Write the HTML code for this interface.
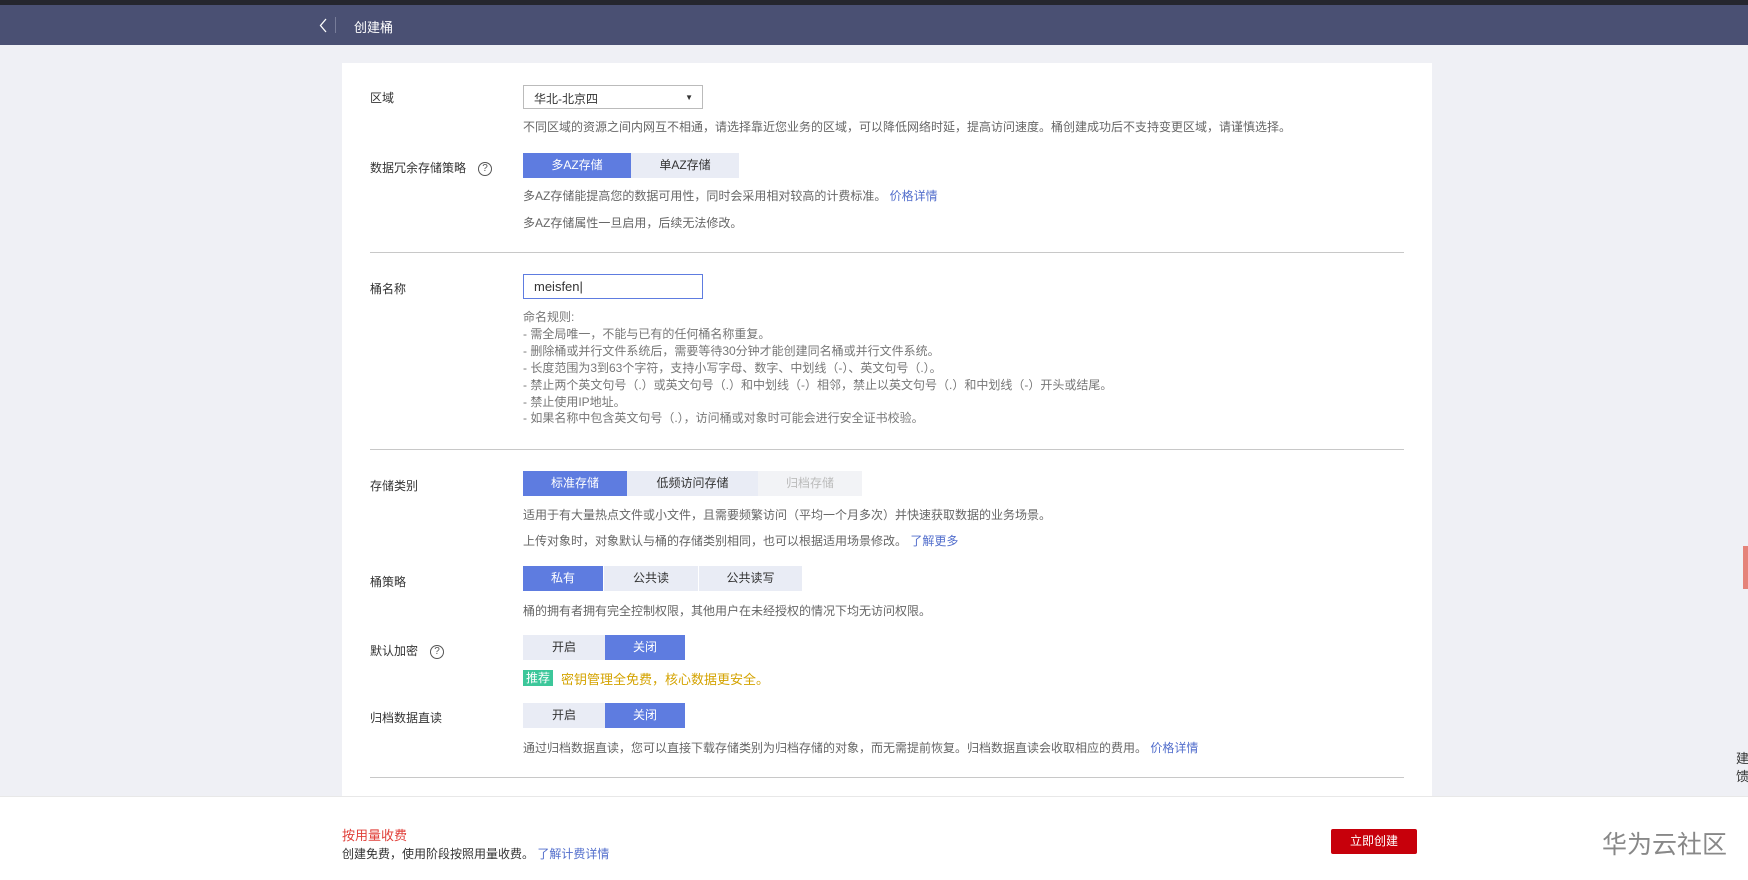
<!DOCTYPE html>
<html><head><meta charset="utf-8"><style>
*{margin:0;padding:0;box-sizing:border-box}
body{width:1748px;height:880px;overflow:hidden;background:#eff0f5;font-family:"Liberation Sans","Noto Sans CJK SC",sans-serif;font-size:12px;color:#333;position:relative}
.a{position:absolute;white-space:nowrap}
.top{position:absolute;left:0;top:0;width:1748px;height:5px;background:#25262e}
.nav{position:absolute;left:0;top:5px;width:1748px;height:40px;background:#4a5073}
.card{position:absolute;left:342px;top:63px;width:1090px;height:760px;background:#fff}
.lbl{font-size:12px;color:#333}
.d{color:#666;font-size:12px}
.btn{position:absolute;height:25px;line-height:25px;text-align:center;font-size:12px;color:#333;background:#e9ecf5}
.on{background:#5e7ce0;color:#fff}
.dis{color:#bbb;background:#f2f3f6}
.hr{position:absolute;left:370px;width:1034px;height:1px;background:#c8c8c8}
.lk{color:#526ecc}
.q{display:inline-block;width:14px;height:14px;border:1px solid #555;border-radius:50%;font-size:10px;line-height:12px;text-align:center;color:#555;margin-left:12px;vertical-align:middle}
.foot{position:absolute;left:0;top:796px;width:1748px;height:84px;background:#fff;border-top:1px solid #e8e8e8}
</style></head><body>
<div class="top"></div>
<div class="nav">
<svg class="a" style="left:319px;top:13px" width="8" height="15" viewBox="0 0 8 15"><path d="M7 1L1.5 7.5L7 14" fill="none" stroke="#fff" stroke-width="1.3"/></svg>
<div class="a" style="left:335px;top:12px;width:1px;height:16px;background:#777c99"></div>
<div class="a" style="left:354px;top:12px;color:#fff;font-size:13px">创建桶</div>
</div>
<div class="card"></div>

<div class="a lbl" style="left:370px;top:89px">区域</div>
<div class="a" style="left:523px;top:85px;width:180px;height:24px;border:1px solid #bbb;font-size:12px;padding:4px 10px;color:#333">华北-北京四<span style="position:absolute;right:9px;top:7px;font-size:8px">▼</span></div>
<div class="a d" style="left:523px;top:118px">不同区域的资源之间内网互不相通，请选择靠近您业务的区域，可以降低网络时延，提高访问速度。桶创建成功后不支持变更区域，请谨慎选择。</div>

<div class="a lbl" style="left:370px;top:159px">数据冗余存储策略<span class="q">?</span></div>
<div class="btn on" style="left:523px;top:153px;width:108px">多AZ存储</div>
<div class="btn" style="left:631px;top:153px;width:108px">单AZ存储</div>
<div class="a d" style="left:523px;top:187px">多AZ存储能提高您的数据可用性，同时会采用相对较高的计费标准。 <span class="lk">价格详情</span></div>
<div class="a d" style="left:523px;top:214px">多AZ存储属性一旦启用，后续无法修改。</div>
<div class="hr" style="top:252px"></div>

<div class="a lbl" style="left:370px;top:280px">桶名称</div>
<div class="a" style="left:523px;top:274px;width:180px;height:25px;border:1px solid #5e7ce0;font-size:13px;padding:4px 10px;color:#333">meisfen|</div>
<div class="a d" style="left:523px;top:309px;line-height:16.9px;color:#777">命名规则:<br>- 需全局唯一，不能与已有的任何桶名称重复。<br>- 删除桶或并行文件系统后，需要等待30分钟才能创建同名桶或并行文件系统。<br>- 长度范围为3到63个字符，支持小写字母、数字、中划线（-）、英文句号（.）。<br>- 禁止两个英文句号（.）或英文句号（.）和中划线（-）相邻，禁止以英文句号（.）和中划线（-）开头或结尾。<br>- 禁止使用IP地址。<br>- 如果名称中包含英文句号（.），访问桶或对象时可能会进行安全证书校验。</div>
<div class="hr" style="top:449px"></div>

<div class="a lbl" style="left:370px;top:477px">存储类别</div>
<div class="btn on" style="left:523px;top:471px;width:104px">标准存储</div>
<div class="btn" style="left:627px;top:471px;width:131px">低频访问存储</div>
<div class="btn dis" style="left:758px;top:471px;width:104px">归档存储</div>
<div class="a d" style="left:523px;top:506px">适用于有大量热点文件或小文件，且需要频繁访问（平均一个月多次）并快速获取数据的业务场景。</div>
<div class="a d" style="left:523px;top:532px">上传对象时，对象默认与桶的存储类别相同，也可以根据适用场景修改。 <span class="lk">了解更多</span></div>

<div class="a lbl" style="left:370px;top:573px">桶策略</div>
<div class="btn on" style="left:523px;top:566px;width:80px">私有</div>
<div class="btn" style="left:604px;top:566px;width:94px">公共读</div>
<div class="btn" style="left:699px;top:566px;width:103px">公共读写</div>
<div class="a d" style="left:523px;top:602px">桶的拥有者拥有完全控制权限，其他用户在未经授权的情况下均无访问权限。</div>

<div class="a lbl" style="left:370px;top:642px">默认加密<span class="q">?</span></div>
<div class="btn" style="left:523px;top:635px;width:82px">开启</div>
<div class="btn on" style="left:605px;top:635px;width:80px">关闭</div>
<div class="a" style="left:523px;top:670px;background:#3cc79a;color:#fff;font-size:12px;padding:0 3px;height:16px;line-height:16px">推荐</div>
<div class="a" style="left:561px;top:669px;color:#d4a300;font-size:13px">密钥管理全免费，核心数据更安全。</div>

<div class="a lbl" style="left:370px;top:709px">归档数据直读</div>
<div class="btn" style="left:523px;top:703px;width:82px">开启</div>
<div class="btn on" style="left:605px;top:703px;width:80px">关闭</div>
<div class="a d" style="left:523px;top:739px">通过归档数据直读，您可以直接下载存储类别为归档存储的对象，而无需提前恢复。归档数据直读会收取相应的费用。 <span class="lk">价格详情</span></div>
<div class="hr" style="top:777px"></div>

<div class="a" style="left:1743px;top:546px;width:5px;height:43px;background:#e5837a"></div>
<div class="a" style="left:1736px;top:750px;font-size:13px;line-height:18px;color:#333">建<br>馈</div>

<div class="foot">
<div class="a" style="left:342px;top:28px;color:#e0403a;font-size:13px">按用量收费</div>
<div class="a" style="left:342px;top:48px;color:#333;font-size:12px">创建免费，使用阶段按照用量收费。 <span class="lk">了解计费详情</span></div>
<div class="a" style="left:1331px;top:32px;width:86px;height:25px;background:#c7000b;color:#fff;text-align:center;line-height:25px;font-size:12px;border-radius:2px">立即创建</div>
<div class="a" style="left:1602px;top:28px;color:#888;font-size:25px">华为云社区</div>
</div>
</body></html>
